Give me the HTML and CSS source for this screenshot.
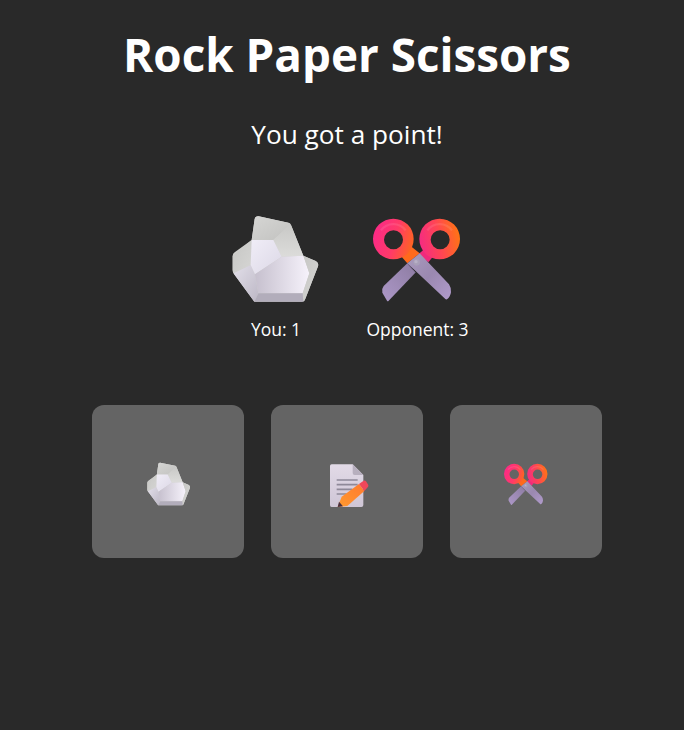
FILE: index.html
```html
<!DOCTYPE html>
<html lang="en">
<head>
<meta charset="utf-8">
<title>Rock Paper Scissors</title>
<link rel="stylesheet" href="styles.css">
</head>
<body>
<svg class="defs" aria-hidden="true">
  <defs>
    <linearGradient id="rockTop" x1="0" y1="0" x2="1" y2="1"><stop offset="0" stop-color="#d6d6d4"/><stop offset="1" stop-color="#c2c2c0"/></linearGradient>
    <linearGradient id="rockRight" x1="0" y1="0" x2="0" y2="1"><stop offset="0" stop-color="#c8c8c6"/><stop offset="1" stop-color="#dcdcda"/></linearGradient>
    <linearGradient id="rockBright" x1="0" y1="0" x2="1" y2="1"><stop offset="0" stop-color="#f0edf7"/><stop offset="1" stop-color="#dcd8e6"/></linearGradient>
    <linearGradient id="rockLow" x1="0" y1="0" x2="1" y2="1"><stop offset="0" stop-color="#e2dfe9"/><stop offset="1" stop-color="#bdb8c6"/></linearGradient>
    <linearGradient id="rockMain" x1="0" y1="0" x2="1" y2="0"><stop offset="0" stop-color="#c6c0ce"/><stop offset="1" stop-color="#f6f2fb"/></linearGradient>
    <linearGradient id="rockSide" x1="0" y1="0" x2="1" y2="1"><stop offset="0" stop-color="#c6c6c4"/><stop offset="1" stop-color="#d6d6d4"/></linearGradient>
    <linearGradient id="ringL" gradientUnits="userSpaceOnUse" x1="25" y1="90" x2="150" y2="125"><stop offset="0" stop-color="#fb2a86"/><stop offset="0.5" stop-color="#ff3a68"/><stop offset="1" stop-color="#ff6a18"/></linearGradient>
    <linearGradient id="ringR" gradientUnits="userSpaceOnUse" x1="163" y1="120" x2="285" y2="95"><stop offset="0" stop-color="#f52a84"/><stop offset="0.5" stop-color="#ff4652"/><stop offset="1" stop-color="#ff7414"/></linearGradient>
    <linearGradient id="bladeA" x1="1" y1="0" x2="0" y2="1"><stop offset="0" stop-color="#8d7ca2"/><stop offset="1" stop-color="#ad98c8"/></linearGradient>
    <linearGradient id="bladeB" x1="0" y1="0" x2="1" y2="1"><stop offset="0" stop-color="#aa9bbd"/><stop offset="0.5" stop-color="#9a88b0"/><stop offset="1" stop-color="#b19bcc"/></linearGradient>
    <linearGradient id="sheet" x1="0" y1="0" x2="0" y2="1"><stop offset="0" stop-color="#e2dae7"/><stop offset="1" stop-color="#cfc6d6"/></linearGradient>
    <linearGradient id="pencil" x1="0" y1="1" x2="1" y2="0"><stop offset="0" stop-color="#ff9a2e"/><stop offset="1" stop-color="#ff7a30"/></linearGradient>

    <symbol id="rock" viewBox="0 0 330 315">
      <path d="M95 105 L104 42 Q106 33 116 34 L205 53 Q211 54 214 62 L250 152 L287 168 Q297 174 294 184 L256 281 Q253 290 244 290 L103 290 L42 207 Q38 202 38 195 L38 153 Q38 146 44 142 Z" fill="#cfcfcd"/>
      <path d="M95 105 L104 42 Q106 33 116 34 L205 53 Q210 54 212 58 L160 105 Z" fill="url(#rockTop)"/>
      <path d="M212 58 L250 152 L185 155 L160 105 Z" fill="url(#rockRight)"/>
      <path d="M95 105 L38 153 L38 195 Q38 202 41 205 L92 180 Z" fill="url(#rockSide)"/>
      <path d="M92 180 L105 208 L115 265 L103 290 L42 207 Q41 206 41 205 Z" fill="url(#rockLow)"/>
      <path d="M95 105 L160 105 L185 155 L105 208 L92 180 Z" fill="url(#rockBright)"/>
      <path d="M185 155 L250 152 L268 205 L248 265 L115 265 L105 208 Z" fill="url(#rockMain)"/>
      <path d="M250 152 L287 168 Q297 174 294 184 L256 281 Q253 290 250 290 L248 265 L268 205 Z" fill="url(#rockSide)"/>
      <path d="M115 265 L248 265 L250 290 L103 290 Z" fill="#b2adbb"/>
    </symbol>

    <symbol id="scissors" viewBox="0 0 315 315">
      <path d="M160 148 L190 122 L206 152 L190 172 Z" fill="#ef2a7c"/>
      <path d="M105 150 L130 118 L164 145 L127 175 Z" fill="#ff6a1c"/>
      <path d="M127 175 L56 243 Q49 252 52 263 L66 287 Q68 290 71 287 L151 203 Z" fill="url(#bladeA)"/>
      <path d="M164 145 L252 238 Q258 246 258 262 Q256 276 246 283 Q243 284 241 282 L127 175 Z" fill="url(#bladeB)"/>
      <path d="M127 175 L151 203" stroke="#7c6a92" stroke-width="3"/>
      <circle cx="155" cy="172" r="10" fill="#a89fb8"/>
      <circle cx="153" cy="170" r="5" fill="#b8b0c6"/>
      <path fill-rule="evenodd" d="M24 102 a61 61 0 1 0 122 0 a61 61 0 1 0 -122 0 Z M57 104 a28.5 28.5 0 1 1 57 0 a28.5 28.5 0 1 1 -57 0 Z" fill="url(#ringL)"/>
      <path fill-rule="evenodd" d="M163 102 a61 61 0 1 0 122 0 a61 61 0 1 0 -122 0 Z M197 104 a28.5 28.5 0 1 1 57 0 a28.5 28.5 0 1 1 -57 0 Z" fill="url(#ringR)"/>
      <path d="M48 76 A46 46 0 0 1 122 76" fill="none" stroke="#fff" stroke-opacity="0.1" stroke-width="7"/>
      <path d="M187 76 A46 46 0 0 1 261 76" fill="none" stroke="#fff" stroke-opacity="0.1" stroke-width="7"/>
    </symbol>

    <symbol id="paper" viewBox="0 0 195 195">
      <path d="M50 40 L113 40 L145 72 L145 162 Q145 168 139 168 L50 168 Q45 168 45 162 L45 45 Q45 40 50 40 Z" fill="url(#sheet)"/>
      <path d="M113 40 L145 72 L119 72 Q113 72 113 66 Z" fill="#b7afbe"/>
      <path d="M65 87 H128 M65 101 H128 M65 115 H112 M65 129 H95" stroke="#8f8999" stroke-width="5" fill="none"/>
      <path d="M80 137 L132 99 L148 120 L97 165 L68 168 Z" fill="url(#pencil)"/>
      <path d="M68 168 L72 152 L84 166 Z" fill="#4a3040"/>
      <path d="M132 99 L146 89 Q150 87 153 91 L160 102 Q161 106 158 109 L148 120 Z" fill="#f0475a"/>
    </symbol>
  </defs>
</svg>

<main class="game">
  <h1 class="title">Rock Paper Scissors</h1>
  <p class="status">You got a point!</p>

  <section class="score">
    <figure class="player player-rock">
      <svg class="big-rock"><use href="#rock"/></svg>
      <figcaption class="label">You: 1</figcaption>
    </figure>
    <figure class="player">
      <svg class="big-scissors"><use href="#scissors"/></svg>
      <figcaption class="label">Opponent: 3</figcaption>
    </figure>
  </section>

  <section class="choices">
    <button class="choice" aria-label="Rock"><svg class="small-rock"><use href="#rock"/></svg></button>
    <button class="choice" aria-label="Paper"><svg class="small-paper"><use href="#paper"/></svg></button>
    <button class="choice" aria-label="Scissors"><svg class="small-scissors"><use href="#scissors"/></svg></button>
  </section>
</main>
</body>
</html>
```

FILE: styles.css
```css
html, body {
  margin: 0;
  height: 100%;
  overflow: hidden;
}

body {
  background: #292929;
  color: #fff;
  font-family: "Open Sans", sans-serif;
  padding-left: 10px;
  box-sizing: border-box;
}

.defs {
  position: absolute;
  width: 0;
  height: 0;
}

.game {
  display: flex;
  flex-direction: column;
  align-items: center;
}

.title {
  margin: 24px 0 0;
  font-size: 45.8px;
  line-height: 61px;
  font-weight: 700;
}

.status {
  margin: 31px 0 0;
  font-size: 26.2px;
  line-height: 36px;
}

.score {
  display: flex;
  gap: 33px;
  margin-top: 53px;
  padding-right: 4px;
}

.player {
  margin: 0;
  display: flex;
  flex-direction: column;
  align-items: center;
}

.player-rock {
  width: 112px;
}

.big-rock {
  width: 110px;
  height: 105px;
  display: block;
  align-self: flex-start;
}

.big-scissors {
  width: 105px;
  height: 105px;
  display: block;
}

.label {
  margin-top: 7px;
  font-size: 17.5px;
  line-height: 24px;
  white-space: nowrap;
}

.choices {
  display: flex;
  gap: 27px;
  margin-top: 64px;
}

.choice {
  width: 152px;
  height: 153px;
  padding: 3px 0 0;
  border: 0;
  border-radius: 12px;
  background: #646464;
  display: flex;
  align-items: center;
  justify-content: center;
}

.small-rock {
  width: 55px;
  height: 52.5px;
}

.small-paper {
  width: 65px;
  height: 65px;
}

.small-scissors {
  width: 52.5px;
  height: 52.5px;
}
```
